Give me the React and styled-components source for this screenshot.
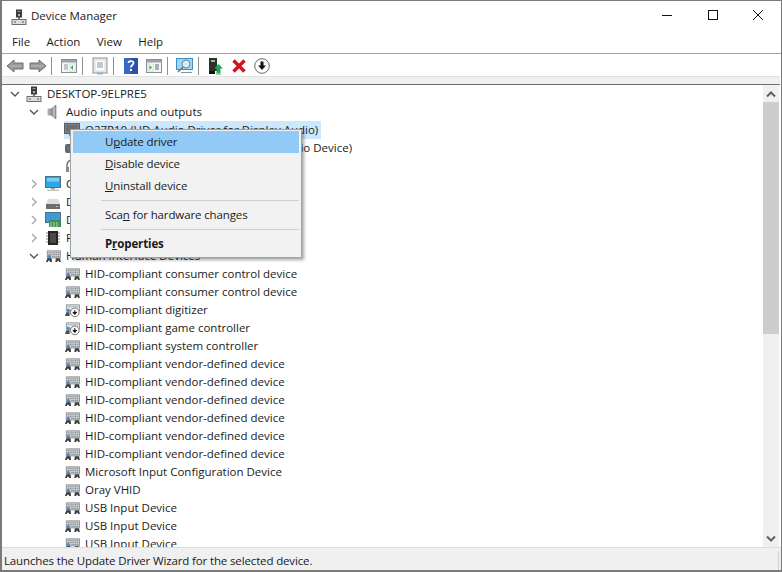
import React from 'react';
import styled, { createGlobalStyle } from 'styled-components';

const GlobalStyle = createGlobalStyle`
  html, body { margin: 0; padding: 0; background: #fff; }
  body { font-family: "Open Sans", "Noto Sans", "Liberation Sans", sans-serif; }
`;

const PcIcon = ({ size = 16 }) => (
  <svg width={size} height={size} viewBox="0 0 16 16">
    <rect x="5" y="0.5" width="6" height="8" fill="#3c3c3c" />
    <rect x="6.5" y="2" width="3" height="1" fill="#9a9a9a" />
    <rect x="7" y="5" width="2" height="2" fill="#7fd47f" />
    <rect x="7" y="8" width="2" height="3" fill="#777" />
    <rect x="1" y="10.5" width="14" height="5" fill="#dcdcdc" stroke="#6e6e6e" />
    <rect x="3" y="12.5" width="2" height="1" fill="#555" />
    <rect x="11" y="12.5" width="2" height="1" fill="#555" />
  </svg>
);

const SpeakerIcon = () => (
  <svg width="16" height="16" viewBox="0 0 16 16">
    <rect x="3" y="5" width="3" height="6" fill="#b5b5b5" stroke="#8c8c8c" strokeWidth="0.6" />
    <path d="M6 5 L11 1 V15 L6 11 Z" fill="#9b9b9b" stroke="#777" strokeWidth="0.6" />
    <path d="M9 3 V13" stroke="#d5d5d5" />
  </svg>
);

const MonitorIcon = () => (
  <svg width="16" height="16" viewBox="0 0 16 16">
    <rect x="0.5" y="1.5" width="15" height="10" fill="#808080" stroke="#5d5d5d" />
    <rect x="2" y="3" width="12" height="7" fill="#6f6f6f" />
    <rect x="5" y="12" width="6" height="2" fill="#8a8a8a" />
  </svg>
);

const SoundBoxIcon = () => (
  <svg width="16" height="16" viewBox="0 0 16 16">
    <rect x="1" y="4" width="14" height="9" rx="2" fill="#666" />
    <circle cx="5" cy="8.5" r="2.5" fill="#4679a8" />
    <rect x="9" y="7" width="5" height="3" fill="#999" />
  </svg>
);

const HeadsetIcon = () => (
  <svg width="16" height="16" viewBox="0 0 16 16">
    <path d="M3 10 V7 a5 5 0 0 1 10 0 V10" fill="none" stroke="#6a6a6a" strokeWidth="1.4" />
    <rect x="2" y="9" width="3" height="5" fill="#8a8a8a" />
    <rect x="11" y="9" width="3" height="5" fill="#8a8a8a" />
  </svg>
);

const ComputerIcon = () => (
  <svg width="16" height="16" viewBox="0 0 16 16">
    <rect x="0.5" y="0.5" width="15" height="11" fill="#2fa7e6" stroke="#4f6f85" />
    <rect x="2" y="2" width="12" height="3.5" fill="#6fd0f7" />
    <rect x="6" y="12" width="4" height="1.5" fill="#9c9c9c" />
    <rect x="2" y="13.5" width="12" height="1.5" fill="#c4c4c4" />
  </svg>
);

const DiskIcon = () => (
  <svg width="16" height="16" viewBox="0 0 16 16">
    <path d="M3 5 H13 L15 10 H1 Z" fill="#dcdcdc" />
    <rect x="1" y="10" width="14" height="5" fill="#6e6e6e" />
    <rect x="11" y="12" width="2" height="1" fill="#7fdc7f" />
  </svg>
);

const DisplayIcon = () => (
  <svg width="16" height="16" viewBox="0 0 16 16">
    <rect x="0.5" y="0.5" width="15" height="10" fill="#3f9ad8" stroke="#4f6f85" />
    <rect x="4" y="8" width="12" height="7" fill="#3e8f5a" />
    <path d="M6 15 V10 M9 15 V10 M12 15 V10" stroke="#c7d98a" />
  </svg>
);

const ChipIcon = () => (
  <svg width="16" height="16" viewBox="0 0 16 16">
    <rect x="3" y="1" width="10" height="14" fill="#262626" />
    <path d="M1 3 H15 M1 6 H15 M1 9 H15 M1 12 H15" stroke="#8a8a8a" strokeDasharray="2 10" />
    <rect x="5" y="3" width="6" height="10" fill="#4a4a4a" />
  </svg>
);

const HidIcon = () => (
  <svg width="17" height="16" viewBox="0 0 17 16">
    <path d="M2.5 2.5 H16.5 V10 H2.5 Z" fill="#c9ced2" stroke="#8f9397" />
    <path d="M4 4.5 H15 M4 6.5 H15 M8 8.5 H15" stroke="#6f7479" strokeDasharray="1 1" />
    <circle cx="4.5" cy="9" r="2" fill="#3f8fd6" />
    <path d="M1 14.5 L2.5 10.5 H7 L7.5 14.5 H5.5 L5 13 H3.5 L3 14.5 Z" fill="#3f3f3f" />
    <path d="M11 14.5 L11.5 10.5 H16 L16.8 14.5 H15 L14.5 13 H13.5 L13 14.5 Z" fill="#3f3f3f" />
  </svg>
);

const HidDownIcon = () => (
  <svg width="17" height="16" viewBox="0 0 17 16">
    <path d="M2.5 2.5 H16.5 V9 H2.5 Z" fill="#e3e5e7" stroke="#8f9397" />
    <path d="M4 4.5 H15" stroke="#80858a" strokeDasharray="1 1" />
    <circle cx="4.5" cy="8.5" r="1.8" fill="#3f8fd6" />
    <path d="M1 14.5 L2.5 10.5 H6 L6 14.5 Z" fill="#4c4c4c" />
    <circle cx="11.5" cy="10.5" r="4.6" fill="#fff" stroke="#6a6a6a" />
    <path d="M11.5 8 V11.5 M9.5 10.5 L11.5 12.8 L13.5 10.5 Z" stroke="#111" fill="#111" strokeWidth="1" />
  </svg>
);

const ArrowIcon = ({ flip }) => (
  <svg width="18" height="16" viewBox="0 0 18 16" style={{ transform: flip ? 'scaleX(-1)' : 'none' }}>
    <path d="M1 8 L8 2 V5 H17 V11 H8 V14 Z" fill="#9a9a9a" stroke="#6f6f6f" />
    <path d="M4 8 H16" stroke="#bdbdbd" />
  </svg>
);

const PaneIcon = ({ mark }) => (
  <svg width="16" height="16" viewBox="0 0 16 16">
    <rect x="0.5" y="1.5" width="15" height="13" fill="#f4f6f8" stroke="#8a8f94" />
    <rect x="1" y="2" width="14" height="2.5" fill="#9ca4aa" />
    {mark === 'left' ? (
      <>
        <path d="M3 7 H7 M3 9 H7 M3 11 H7" stroke="#8a9aa5" />
        <rect x="9" y="6" width="5" height="7" fill="#fff" stroke="#b7bcc0" strokeWidth="0.5" />
        <path d="M12 7 V12 L9.5 9.5 Z" fill="#2ea44f" />
      </>
    ) : (
      <>
        <path d="M9 7 H13 M9 9 H13 M9 11 H13" stroke="#55697a" />
        <rect x="2" y="6" width="5" height="7" fill="#fff" stroke="#b7bcc0" strokeWidth="0.5" />
        <path d="M3.5 7 V12 L6 9.5 Z" fill="#2ea44f" />
      </>
    )}
  </svg>
);

const SheetIcon = () => (
  <svg width="16" height="18" viewBox="0 0 16 18">
    <rect x="1" y="1" width="14" height="15" fill="#f1f1f1" stroke="#909090" />
    <rect x="3" y="3" width="10" height="11" fill="#fff" stroke="#c5c5c5" strokeWidth="0.6" />
    <path d="M5 6 H11 M5 8 H11 M5 10 H11" stroke="#7f93a3" />
    <rect x="5" y="15.5" width="6" height="2" fill="#7cc0e6" />
  </svg>
);

const HelpIcon = () => (
  <svg width="14" height="16" viewBox="0 0 14 16">
    <rect x="0" y="0" width="14" height="16" fill="#2c50a8" />
    <rect x="0" y="0" width="7" height="16" fill="#3d66c2" />
    <path d="M4.5 5 C4.5 2.5 9.5 2.5 9.5 5 C9.5 7 7 7 7 9.5" fill="none" stroke="#fff" strokeWidth="1.8" />
    <rect x="6" y="11" width="2" height="2" fill="#fff" />
  </svg>
);

const ScanIcon = () => (
  <svg width="17" height="16" viewBox="0 0 17 16">
    <rect x="0.5" y="0.5" width="16" height="11" fill="#9fd6f4" stroke="#3f8fc4" />
    <circle cx="10" cy="6" r="4" fill="#d6eefb" stroke="#6d8794" />
    <path d="M7 9 L2 14" stroke="#6d7680" strokeWidth="1.6" />
    <path d="M5 14.5 H16" stroke="#8a9299" />
  </svg>
);

const UpdateIcon = () => (
  <svg width="14" height="17" viewBox="0 0 14 17">
    <rect x="0" y="0" width="8" height="13" fill="#2f2f2f" />
    <rect x="2" y="2" width="4" height="2" fill="#7fd47f" />
    <rect x="0" y="13" width="6" height="3" fill="#111" />
    <path d="M9.5 6 L14 10.5 H11.5 V15 H7.5 V10.5 H5 Z" fill="#25a35a" />
    <path d="M7 16 H12" stroke="#25a35a" />
  </svg>
);

const RemoveIcon = () => (
  <svg width="14" height="14" viewBox="0 0 14 14">
    <path d="M1.5 1.5 L12.5 12.5 M12.5 1.5 L1.5 12.5" stroke="#cf1322" strokeWidth="3.4" />
  </svg>
);

const DownCircleIcon = () => (
  <svg width="16" height="16" viewBox="0 0 16 16">
    <circle cx="8" cy="8" r="7.3" fill="#fff" stroke="#6a6a6a" />
    <path d="M6.5 3.5 H9.5 V7.5 H12 L8 12 L4 7.5 H6.5 Z" fill="#111" />
  </svg>
);

const Chevron = ({ open }) => (
  <svg width="10" height="10" viewBox="0 0 10 10">
    {open ? (
      <path d="M1 3 L5 7 L9 3" fill="none" stroke="#555" strokeWidth="1.4" />
    ) : (
      <path d="M3 1 L7 5 L3 9" fill="none" stroke="#a6a6a6" strokeWidth="1.4" />
    )}
  </svg>
);

const Window = styled.div`
  box-sizing: border-box;
  width: 782px;
  height: 572px;
  display: flex;
  flex-direction: column;
  overflow: hidden;
  background: #fff;
  border-style: solid;
  border-color: #7b7b7b;
  border-width: 1px 1px 2px 2px;
  color: #1a1a1a;
  font-size: 11.5px;
`;

const TitleBar = styled.div`
  height: 31px;
  display: flex;
  align-items: center;
  padding-left: 9px;
  flex: none;
`;

const TitleText = styled.span`
  margin: 0 0 2px 4px;
`;

const WindowControls = styled.div`
  margin-left: auto;
  display: flex;
  align-self: flex-start;
`;

const ControlButton = styled.div`
  width: 45.5px;
  height: 28px;
  display: flex;
  align-items: center;
  justify-content: center;
`;

const MenuBar = styled.div`
  height: 19px;
  flex: none;
  display: flex;
  align-items: center;
  padding: 0 0 2px 10px;
  gap: 16.4px;
  border-bottom: 1px solid #a3a3a3;
`;

const Toolbar = styled.div`
  height: 20px;
  flex: none;
  display: flex;
  align-items: center;
  padding: 2px 0 0 1px;
`;

const ToolButton = styled.div`
  width: 23px;
  height: 20px;
  flex: none;
  display: flex;
  align-items: center;
  justify-content: center;
`;

const ToolSep = styled.div`
  width: 1px;
  height: 18px;
  margin: 0 5px 0 2px;
  flex: none;
  background: #8f8f8f;
`;

const Strip = styled.div`
  height: 7px;
  flex: none;
  background: #f0f0f0;
  border-top: 1px solid #e2e2e2;
  border-bottom: 1px solid #6f6f6f;
  margin-right: 1px;
`;

const Content = styled.div`
  flex: 1;
  min-height: 0;
  display: flex;
  padding-right: 2px;
`;

const Tree = styled.div`
  flex: 1;
  min-width: 0;
  overflow: hidden;
`;

const Row = styled.div`
  height: 18px;
  display: flex;
  align-items: center;
  padding-left: ${p => 6 + p.$level * 19}px;
  white-space: nowrap;
`;

const Expander = styled.span`
  width: 14px;
  height: 14px;
  margin-right: 4px;
  flex: none;
  display: flex;
  align-items: center;
  justify-content: center;
`;

const Label = styled.div`
  display: flex;
  align-items: center;
  height: 18px;
  padding-right: 3px;
  background: ${p => (p.$selected ? '#cce8ff' : 'transparent')};
`;

const LabelText = styled.span`
  margin: 0 0 2px 5px;
`;

const IconBox = styled.span`
  width: 16px;
  height: 16px;
  flex: none;
  display: flex;
`;

const Scrollbar = styled.div`
  width: 16px;
  flex: none;
  display: flex;
  flex-direction: column;
  background: #f0f0f0;
`;

const ScrollArrow = styled.div`
  height: 17px;
  flex: none;
  display: flex;
  align-items: center;
  justify-content: center;
  margin-top: ${p => (p.$bottom ? 'auto' : '0')};
`;

const ScrollThumb = styled.div`
  height: 232px;
  background: #cdcdcd;
`;

const StatusBar = styled.div`
  height: 20px;
  flex: none;
  display: flex;
  align-items: center;
  padding: 2px 2px 0 2px;
  background: #f0f0f0;
  border-top: 1px solid #dcdcdc;
  letter-spacing: -0.14px;
`;

const StatusGrip = styled.div`
  margin-left: auto;
  width: 1px;
  height: 19px;
  background: #d0d0d0;
`;

const ContextMenu = styled.div`
  position: absolute;
  left: 70px;
  top: 129px;
  box-sizing: border-box;
  width: 232px;
  padding: 1px 2px 2px;
  background: #f2f2f2;
  border: 1px solid #a0a0a0;
  box-shadow: 2px 2px 3px rgba(0, 0, 0, 0.35);
  color: #1a1a1a;
  font-size: 11.5px;
  letter-spacing: -0.12px;
`;

const MenuItem = styled.div`
  height: 22px;
  line-height: 22px;
  padding-left: 32px;
  background: ${p => (p.$active ? '#91c9f7' : 'transparent')};
  font-weight: ${p => (p.$bold ? 700 : 400)};
`;

const MenuSep = styled.div`
  height: 1px;
  margin: 3px 0 3px 28px;
  background: #cfcfcf;
`;

const audio = [
  { text: 'Q27P10 (HD Audio Driver for Display Audio)', icon: MonitorIcon, selected: true },
  { text: 'Speakers (2- Realtek High Definition Audio Device)', icon: SoundBoxIcon },
  { text: 'Headset Microphone', icon: HeadsetIcon },
];

const groups = [
  { text: 'Computer', icon: ComputerIcon },
  { text: 'Disk drives', icon: DiskIcon },
  { text: 'Display adapters', icon: DisplayIcon },
  { text: 'Firmware', icon: ChipIcon },
];

const hid = [
  ['HID-compliant consumer control device', HidIcon],
  ['HID-compliant consumer control device', HidIcon],
  ['HID-compliant digitizer', HidDownIcon],
  ['HID-compliant game controller', HidDownIcon],
  ['HID-compliant system controller', HidIcon],
  ['HID-compliant vendor-defined device', HidIcon],
  ['HID-compliant vendor-defined device', HidIcon],
  ['HID-compliant vendor-defined device', HidIcon],
  ['HID-compliant vendor-defined device', HidIcon],
  ['HID-compliant vendor-defined device', HidIcon],
  ['HID-compliant vendor-defined device', HidIcon],
  ['Microsoft Input Configuration Device', HidIcon],
  ['Oray VHID', HidIcon],
  ['USB Input Device', HidIcon],
  ['USB Input Device', HidIcon],
  ['USB Input Device', HidIcon],
];

const TreeRow = ({ level, expander, icon: Icon, text, selected }) => (
  <Row $level={level}>
    <Expander>{expander && <Chevron open={expander === 'open'} />}</Expander>
    <Label $selected={selected}>
      <IconBox><Icon /></IconBox>
      <LabelText>{text}</LabelText>
    </Label>
  </Row>
);

export default function App() {
  return (
    <Window>
      <GlobalStyle />
      <TitleBar>
        <PcIcon />
        <TitleText>Device Manager</TitleText>
        <WindowControls>
          <ControlButton>
            <svg width="10" height="10" viewBox="0 0 10 10"><path d="M0 5.5 H10" stroke="#111" /></svg>
          </ControlButton>
          <ControlButton>
            <svg width="10" height="10" viewBox="0 0 10 10"><rect x="0.5" y="0.5" width="9" height="9" fill="none" stroke="#111" /></svg>
          </ControlButton>
          <ControlButton>
            <svg width="10" height="10" viewBox="0 0 10 10"><path d="M0 0 L10 10 M10 0 L0 10" stroke="#111" /></svg>
          </ControlButton>
        </WindowControls>
      </TitleBar>
      <MenuBar>
        <span>File</span>
        <span>Action</span>
        <span>View</span>
        <span>Help</span>
      </MenuBar>
      <Toolbar>
        <ToolButton><ArrowIcon /></ToolButton>
        <ToolButton><ArrowIcon flip /></ToolButton>
        <ToolSep />
        <ToolButton><PaneIcon mark="left" /></ToolButton>
        <ToolSep />
        <ToolButton><SheetIcon /></ToolButton>
        <ToolSep />
        <ToolButton><HelpIcon /></ToolButton>
        <ToolButton><PaneIcon mark="right" /></ToolButton>
        <ToolSep />
        <ToolButton><ScanIcon /></ToolButton>
        <ToolSep />
        <ToolButton><UpdateIcon /></ToolButton>
        <ToolButton><RemoveIcon /></ToolButton>
        <ToolButton><DownCircleIcon /></ToolButton>
      </Toolbar>
      <Strip />
      <Content>
        <Tree>
          <TreeRow level={0} expander="open" icon={PcIcon} text="DESKTOP-9ELPRE5" />
          <TreeRow level={1} expander="open" icon={SpeakerIcon} text="Audio inputs and outputs" />
          {audio.map(item => (
            <TreeRow key={item.text} level={2} icon={item.icon} text={item.text} selected={item.selected} />
          ))}
          {groups.map(item => (
            <TreeRow key={item.text} level={1} expander="closed" icon={item.icon} text={item.text} />
          ))}
          <TreeRow level={1} expander="open" icon={HidIcon} text="Human Interface Devices" />
          {hid.map(([text, icon], i) => (
            <TreeRow key={i} level={2} icon={icon} text={text} />
          ))}
        </Tree>
        <Scrollbar>
          <ScrollArrow>
            <svg width="10" height="8" viewBox="0 0 10 8"><path d="M1 6.5 L5 2.5 L9 6.5" fill="none" stroke="#606060" strokeWidth="2" /></svg>
          </ScrollArrow>
          <ScrollThumb />
          <ScrollArrow $bottom>
            <svg width="10" height="8" viewBox="0 0 10 8"><path d="M1 1.5 L5 5.5 L9 1.5" fill="none" stroke="#606060" strokeWidth="2" /></svg>
          </ScrollArrow>
        </Scrollbar>
      </Content>
      <StatusBar>
        <span>Launches the Update Driver Wizard for the selected device.</span>
        <StatusGrip />
      </StatusBar>
      <ContextMenu>
        <MenuItem $active>U<u>p</u>date driver</MenuItem>
        <MenuItem><u>D</u>isable device</MenuItem>
        <MenuItem><u>U</u>ninstall device</MenuItem>
        <MenuSep />
        <MenuItem>Sca<u>n</u> for hardware changes</MenuItem>
        <MenuSep />
        <MenuItem $bold>P<u>r</u>operties</MenuItem>
      </ContextMenu>
    </Window>
  );
}
